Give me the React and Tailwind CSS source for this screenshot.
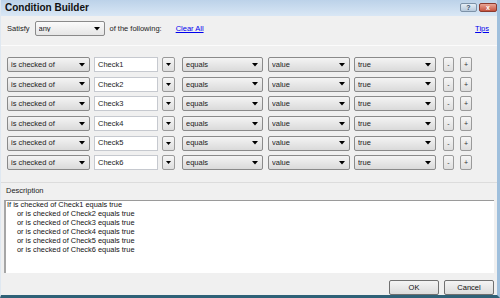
import React from 'react'

const font = { fontFamily: '"Liberation Sans", Arial, sans-serif' }

function Arrow() {
  return (
    <svg width="6" height="4" viewBox="0 0 6 4" className="shrink-0">
      <path d="M0 0 H6 L3 3.5 Z" fill="#000" />
    </svg>
  )
}

function Combo({ text, w, light }) {
  return (
    <div
      className={`flex items-center h-[15px] border border-[#8a8a8a] rounded-[2px] pl-[3px] pr-[4px] shrink-0 ${
        light ? 'bg-gradient-to-b from-[#fafafa] to-[#e6e6e6]' : 'bg-gradient-to-b from-[#f4f4f4] to-[#dadada]'
      }`}
      style={{ width: w }}
    >
      <span className="flex-1 text-[7.5px] leading-none text-[#222] truncate">{text}</span>
      <Arrow />
    </div>
  )
}

function SmallBtn({ children, w }) {
  return (
    <div
      className="h-[15px] border border-[#9a9a9a] rounded-[2px] bg-gradient-to-b from-[#f6f6f6] to-[#dedede] flex items-center justify-center shrink-0 text-[7px] leading-none text-[#333]"
      style={{ width: w }}
    >
      {children}
    </div>
  )
}

function Row({ n }) {
  return (
    <div className="flex items-center h-[19.6px]">
      <Combo text="is checked of" w={83} />
      <div className="ml-[4px] w-[64px] h-[15px] bg-white border border-[#c6c9cf] flex items-center pl-[3px] text-[7.5px] leading-none text-[#222] shrink-0">
        Check{n}
      </div>
      <div className="ml-[4px]">
        <SmallBtn w={13}>
          <svg width="5" height="3" viewBox="0 0 5 3"><path d="M0 0 H5 L2.5 3 Z" fill="#000" /></svg>
        </SmallBtn>
      </div>
      <div className="ml-[7px]"><Combo text="equals" w={81} /></div>
      <div className="ml-[5px]"><Combo text="value" w={82} /></div>
      <div className="ml-[4px]"><Combo text="true" w={82} /></div>
      <div className="ml-[7px]"><SmallBtn w={11}>-</SmallBtn></div>
      <div className="ml-[6px]"><SmallBtn w={12}>+</SmallBtn></div>
    </div>
  )
}

export default function App() {
  const rows = [1, 2, 3, 4, 5, 6]
  return (
    <div className="w-[500px] h-[298px] bg-[#f0f0f0] flex flex-col border-l border-[#dfe8f1] border-r-[3px] border-r-[#9fbfdc] border-b-[3px] border-b-[#2f6177] overflow-hidden" style={font}>
      {/* title bar */}
      <div className="h-[16px] flex items-center bg-gradient-to-b from-[#bcd2e9] to-[#d9e7f5] pl-[4px] pr-[0px] shrink-0">
        <span className="text-[10px] font-bold text-[#111] leading-none">Condition Builder</span>
        <div className="ml-auto flex items-center gap-[2px] mt-[-2px]">
          <div className="w-[17px] h-[9px] rounded-[2px] border border-[#7d92a8] bg-gradient-to-b from-[#e4edf6] to-[#b6c9dc] flex items-center justify-center text-[7px] leading-none font-bold text-[#3a4f66]">?</div>
          <div className="w-[18px] h-[9px] rounded-[2px] border border-[#8c3a2e] bg-gradient-to-b from-[#e9a596] to-[#c4513d] flex items-center justify-center text-[7px] leading-none font-bold text-white">x</div>
        </div>
      </div>

      {/* satisfy row */}
      <div className="flex items-center h-[15px] mt-[5px] pl-[6px] pr-[8px] text-[7.5px] leading-none text-[#222]">
        <span>Satisfy</span>
        <div className="ml-[5px]"><Combo text="any" w={70} light /></div>
        <span className="ml-[5px]">of the following:</span>
        <span className="ml-[14px] text-[#0000ee] underline">Clear All</span>
        <span className="ml-auto text-[#0000ee] underline">Tips</span>
      </div>

      {/* conditions panel */}
      <div className="mt-[9px] h-[138px] border-t border-[#fbfbfb] border-b border-b-[#dcdcdc] pt-[9px] pl-[6px]">
        {rows.map(n => <Row key={n} n={n} />)}
      </div>

      {/* description */}
      <div className="pl-[5px] mt-[3px] text-[7.5px] leading-none text-[#222] h-[10px] flex items-center">Description</div>
      <div className="mx-[3px] mt-[4px] h-[73px] bg-white border-t border-[#9a9a9a] border-l-2 border-l-[#a6a6a6] text-[7.4px] leading-[8.9px] text-[#111] pl-[1px] pt-[0px]">
        <div>If is checked of Check1 equals true</div>
        {[2, 3, 4, 5, 6].map(n => (
          <div key={n} className="pl-[10px]">or is checked of Check{n} equals true</div>
        ))}
      </div>

      {/* buttons */}
      <div className="flex justify-end items-center gap-[5px] pr-[3px] mt-[7px]">
        <div className="w-[50px] h-[15px] border border-[#707070] rounded-[2px] bg-gradient-to-b from-[#f4f4f4] to-[#dcdcdc] flex items-center justify-center text-[7.5px] leading-none text-[#111]">OK</div>
        <div className="w-[50px] h-[15px] border border-[#707070] rounded-[2px] bg-gradient-to-b from-[#f4f4f4] to-[#dcdcdc] flex items-center justify-center text-[7.5px] leading-none text-[#111]">Cancel</div>
      </div>
    </div>
  )
}
